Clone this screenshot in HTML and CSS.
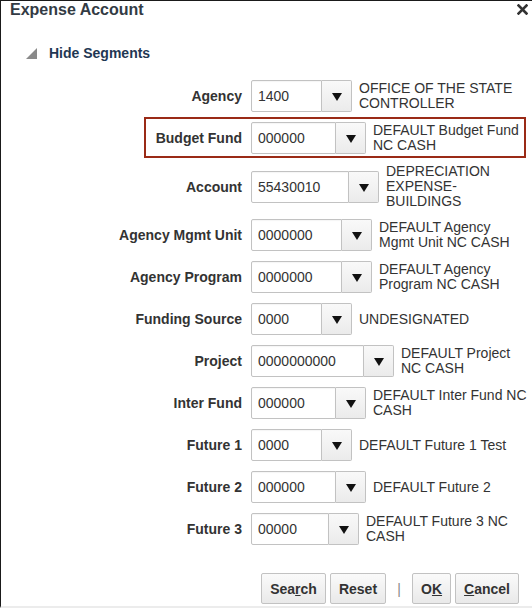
FILE: index.html
```html
<!doctype html>
<html lang="en">
  <head>
    <meta charset="UTF-8" />
    <meta name="viewport" content="width=device-width, initial-scale=1.0" />
    <title>Expense Account</title>
    <link rel="stylesheet" href="styles.css">
  </head>
  <body>
    <div class="dialog">
      <header class="dialog-head">
        <h1>Expense Account</h1>
        <button class="close" title="Close">
          <svg width="11" height="11" viewBox="0 0 11 11">
            <path d="M1.5 1.5 L9.5 9.5 M9.5 1.5 L1.5 9.5" stroke="#333" stroke-width="2.6" stroke-linecap="square" />
          </svg>
        </button>
      </header>

      <div class="segments-toggle">
        <svg width="12" height="11" viewBox="0 0 12 11">
          <polygon points="11,0 11,11 0,11" fill="#8a8a8a" />
        </svg>
        <span>Hide Segments</span>
      </div>

      <!-- Account segments -->
      <div class="segments">
        <div class="seg-row">
          <label class="seg-label">Agency</label>
          <div class="lov">
            <input class="lov-field len-4" type="text" value="1400" />
            <button class="lov-btn"><span class="caret"></span></button>
          </div>
          <div class="seg-desc">OFFICE OF THE STATE CONTROLLER</div>
        </div>

        <div class="seg-row is-highlighted">
          <label class="seg-label">Budget Fund</label>
          <div class="lov">
            <input class="lov-field len-6" type="text" value="000000" />
            <button class="lov-btn"><span class="caret"></span></button>
          </div>
          <div class="seg-desc">DEFAULT Budget Fund NC CASH</div>
          <div class="highlight"></div>
        </div>

        <div class="seg-row">
          <label class="seg-label">Account</label>
          <div class="lov">
            <input class="lov-field len-8" type="text" value="55430010" />
            <button class="lov-btn"><span class="caret"></span></button>
          </div>
          <div class="seg-desc">DEPRECIATION EXPENSE-BUILDINGS</div>
        </div>

        <div class="seg-row">
          <label class="seg-label">Agency Mgmt Unit</label>
          <div class="lov">
            <input class="lov-field len-7" type="text" value="0000000" />
            <button class="lov-btn"><span class="caret"></span></button>
          </div>
          <div class="seg-desc">DEFAULT Agency Mgmt Unit NC CASH</div>
        </div>

        <div class="seg-row">
          <label class="seg-label">Agency Program</label>
          <div class="lov">
            <input class="lov-field len-7" type="text" value="0000000" />
            <button class="lov-btn"><span class="caret"></span></button>
          </div>
          <div class="seg-desc">DEFAULT Agency Program NC CASH</div>
        </div>

        <div class="seg-row">
          <label class="seg-label">Funding Source</label>
          <div class="lov">
            <input class="lov-field len-4" type="text" value="0000" />
            <button class="lov-btn"><span class="caret"></span></button>
          </div>
          <div class="seg-desc">UNDESIGNATED</div>
        </div>

        <div class="seg-row">
          <label class="seg-label">Project</label>
          <div class="lov">
            <input class="lov-field len-10" type="text" value="0000000000" />
            <button class="lov-btn"><span class="caret"></span></button>
          </div>
          <div class="seg-desc">DEFAULT Project NC CASH</div>
        </div>

        <div class="seg-row">
          <label class="seg-label">Inter Fund</label>
          <div class="lov">
            <input class="lov-field len-6" type="text" value="000000" />
            <button class="lov-btn"><span class="caret"></span></button>
          </div>
          <div class="seg-desc">DEFAULT Inter Fund NC CASH</div>
        </div>

        <div class="seg-row">
          <label class="seg-label">Future 1</label>
          <div class="lov">
            <input class="lov-field len-4" type="text" value="0000" />
            <button class="lov-btn"><span class="caret"></span></button>
          </div>
          <div class="seg-desc">DEFAULT Future 1 Test</div>
        </div>

        <div class="seg-row">
          <label class="seg-label">Future 2</label>
          <div class="lov">
            <input class="lov-field len-6" type="text" value="000000" />
            <button class="lov-btn"><span class="caret"></span></button>
          </div>
          <div class="seg-desc">DEFAULT Future 2</div>
        </div>

        <div class="seg-row">
          <label class="seg-label">Future 3</label>
          <div class="lov">
            <input class="lov-field len-5" type="text" value="00000" />
            <button class="lov-btn"><span class="caret"></span></button>
          </div>
          <div class="seg-desc">DEFAULT Future 3 NC CASH</div>
        </div>
      </div>

      <!-- Dialog actions -->
      <div class="actions">
        <button class="btn">Sea<u>r</u>ch</button>
        <button class="btn">Reset</button>
        <span class="sep">|</span>
        <button class="btn">O<u>K</u></button>
        <button class="btn"><u>C</u>ancel</button>
      </div>
    </div>
  </body>
</html>
```

FILE: styles.css
```css
:root {
  --text-color: #333;
  --heading-color: #333b44;
  --link-color: #1f3753;
  --border-color: #c2c2c2;
  --highlight-color: #9a2a16;
}

* {
  box-sizing: border-box;
}

body {
  margin: 0;
  font-family: "Liberation Sans", Arial, sans-serif;
  font-size: 14px;
  color: var(--text-color);
  background: white;
}

.dialog {
  height: 608px;
  border-top: 1px solid #1a1a1a;
  border-left: 1px solid #1a1a1a;
  border-bottom: 2px solid #ececec;
  padding-right: 4px;
}

.dialog-head {
  display: flex;
  justify-content: space-between;
  align-items: flex-start;
  padding-left: 9px;
}

.dialog-head h1 {
  margin: 0;
  font-size: 16px;
  line-height: 18px;
  color: var(--heading-color);
}

.close {
  border: none;
  background: none;
  padding: 0;
  margin: 3px 0 0 0;
  line-height: 0;
  cursor: pointer;
}

.segments-toggle {
  display: flex;
  align-items: center;
  gap: 11px;
  margin: 26px 0 0 25px;
  height: 16px;
  font-weight: bold;
  color: var(--link-color);
}

/* Segment rows */
.segments {
  display: flex;
  flex-direction: column;
  gap: 10px;
  margin-top: 19px;
}

.seg-row {
  position: relative;
  display: flex;
  align-items: center;
  min-height: 32px;
}

.seg-label {
  flex: none;
  width: 241px;
  margin-right: 9px;
  text-align: right;
  font-weight: bold;
}

.lov {
  flex: none;
  display: flex;
  height: 32px;
}

.lov-field {
  height: 32px;
  margin: 0;
  padding: 0 6px;
  border: 1px solid var(--border-color);
  border-radius: 2px 0 0 2px;
  font-family: inherit;
  font-size: 14px;
  color: var(--text-color);
  background: white;
  box-shadow: inset 0 1px 1px rgba(0, 0, 0, 0.04);
}

.len-4 { width: 71px; }
.len-5 { width: 78px; }
.len-6 { width: 85px; }
.len-7 { width: 91px; }
.len-8 { width: 98px; }
.len-10 { width: 113px; }

.lov-btn {
  width: 30px;
  height: 32px;
  margin: 0;
  padding: 0;
  border: 1px solid var(--border-color);
  border-left: none;
  border-radius: 0 2px 2px 0;
  background: linear-gradient(#f9f9f9, #ebebeb);
  display: flex;
  align-items: center;
  justify-content: center;
}

.caret {
  width: 0;
  height: 0;
  border-left: 5px solid transparent;
  border-right: 5px solid transparent;
  border-top: 8px solid #111;
  margin-top: 2px;
}

.seg-desc {
  flex: 1;
  min-width: 0;
  margin-left: 7px;
  line-height: 15px;
}

/* Red annotation box round the Budget Fund row */
.highlight {
  position: absolute;
  left: 143px;
  top: -5px;
  width: 382px;
  height: 41px;
  border: 2.5px solid var(--highlight-color);
  pointer-events: none;
}

/* Footer buttons */
.actions {
  display: flex;
  justify-content: flex-end;
  align-items: center;
  gap: 4px;
  margin-top: 28px;
  padding-right: 9px;
}

.btn {
  height: 31px;
  padding: 0 8px;
  border: 1px solid var(--border-color);
  border-radius: 2px;
  background: linear-gradient(#fafafa, #e9e9e9);
  font-family: inherit;
  font-size: 14px;
  font-weight: bold;
  color: var(--text-color);
  cursor: pointer;
}

.sep {
  width: 18px;
  text-align: center;
  color: #888;
}
```
